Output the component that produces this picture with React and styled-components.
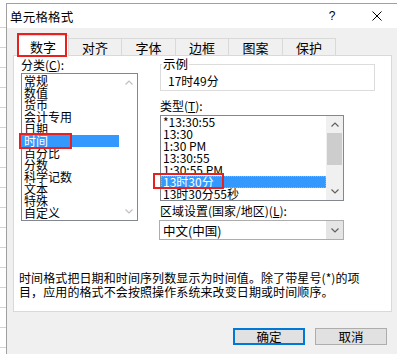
import React from "react";
import styled, { createGlobalStyle } from "styled-components";

const GlobalStyle = createGlobalStyle`
  html, body {
    margin: 0;
    padding: 0;
    background: #fff;
  }
  body {
    font-family: "Noto Sans CJK SC", "Liberation Sans", sans-serif;
    color: #000;
  }
  * {
    box-sizing: border-box;
  }
`;

// spreadsheet behind the dialog
const Sheet = styled.div`
  width: 397px;
  height: 354px;
  overflow: hidden;
  padding: 3px 0 0 6px;
  background-color: #fff;
  background-image: repeating-linear-gradient(
    to bottom,
    transparent 0 19px,
    #d4d4d4 19px 20px
  );
  background-size: 6px 100%;
  background-repeat: no-repeat;
  background-position: 0 8px;
`;

const Dialog = styled.div`
  width: 391px;
  height: 351px;
  background: #f0f0f0;
  border-left: 1px solid #a0a0a0;
  border-top: 1px solid #a0a0a0;
  display: flex;
  flex-direction: column;
`;

const TitleBar = styled.div`
  height: 24px;
  background: #fff;
  display: flex;
  align-items: center;
  padding-left: 3px;
  font-size: 12.5px;
`;

const TitleText = styled.div`
  flex: 1;
  letter-spacing: 0.2px;
`;

const TitleButton = styled.div`
  width: ${({ $w }) => $w}px;
  margin-left: ${({ $gap }) => $gap || 0}px;
  display: flex;
  align-items: center;
  justify-content: center;
  font-family: "Liberation Sans", sans-serif;
  font-size: 12px;
`;

const Body = styled.div`
  flex: 1;
  padding: 7px 5px 0 6px;
  display: flex;
  flex-direction: column;
`;

const Tabs = styled.div`
  display: flex;
  align-items: flex-end;
  height: 21px;
  padding-left: 4px;
  margin-bottom: -1px;
  position: relative;
  z-index: 1;
`;

const Tab = styled.div`
  position: relative;
  width: ${({ $w }) => $w}px;
  height: ${({ $active }) => ($active ? 21 : 18)}px;
  margin-left: ${({ $first }) => ($first ? 0 : -1)}px;
  border: 1px solid #d9d9d9;
  border-bottom: ${({ $active }) => ($active ? "none" : "1px solid #d9d9d9")};
  background: ${({ $active }) => ($active ? "#fff" : "#f0f0f0")};
  z-index: ${({ $active }) => ($active ? 2 : 0)};
  display: flex;
  align-items: center;
  justify-content: center;
  font-size: 13px;
  padding-top: ${({ $active }) => ($active ? 1 : 0)}px;
`;

// red annotation rectangles drawn over the dialog
const RedMark = styled.div`
  position: absolute;
  left: ${({ $l }) => $l}px;
  top: ${({ $t }) => $t}px;
  width: ${({ $w }) => $w}px;
  height: ${({ $h }) => $h}px;
  border: 2px solid #e8201e;
  pointer-events: none;
  z-index: 5;
`;

const Panel = styled.div`
  width: 379px;
  height: 257px;
  border: 1px solid #d9d9d9;
  background: #fff;
  padding: 2px 0 0 7px;
  display: flex;
  flex-direction: column;
  font-size: 12px;
`;

const TopRow = styled.div`
  display: flex;
  height: 182px;
`;

const LeftCol = styled.div`
  width: 117px;
  display: flex;
  flex-direction: column;
`;

const RightCol = styled.div`
  margin-left: 22px;
  width: 216px;
  display: flex;
  flex-direction: column;
`;

const Label = styled.div`
  line-height: 14px;
  height: 14px;
  margin-top: ${({ $mt }) => $mt || 0}px;
  white-space: nowrap;
  u {
    text-decoration: underline;
    text-underline-offset: 1px;
  }
`;

const GroupBox = styled.div`
  position: relative;
  margin-top: 6px;
  width: 215px;
  height: 27px;
  border: 1px solid #dcdcdc;
  padding: 9px 0 0 7px;
  line-height: 14px;
`;

const Legend = styled.span`
  position: absolute;
  left: 1px;
  top: -8px;
  padding: 0 1px;
  background: #fff;
  line-height: 14px;
  font-size: 12.5px;
`;

const ListBox = styled.div`
  position: relative;
  width: ${({ $w }) => $w}px;
  height: ${({ $h }) => $h}px;
  margin-top: ${({ $mt }) => $mt || 0}px;
  border: 1px solid #828790;
  background: #fff;
  display: flex;
`;

const Items = styled.div`
  flex: 1;
  padding-top: ${({ $pt }) => $pt || 0}px;
`;

const Item = styled.div`
  height: 12px;
  line-height: 12px;
  padding-left: 2px;
  white-space: nowrap;
  background: ${({ $selected }) => ($selected ? "#3399ff" : "transparent")};
  color: ${({ $selected }) => ($selected ? "#fff" : "#000")};
  margin-right: ${({ $trim }) => $trim || 0}px;
  outline: ${({ $focus }) => ($focus ? "1px dotted #f0a030" : "none")};
  outline-offset: -1px;
`;

const ScrollBar = styled.div`
  width: 17px;
  background: ${({ $bg }) => $bg};
  display: flex;
  flex-direction: column;
`;

const ScrollArrow = styled.div`
  height: 17px;
  display: flex;
  align-items: center;
  justify-content: center;
`;

const ScrollTrack = styled.div`
  flex: 1;
  display: flex;
  flex-direction: column;
`;

const Thumb = styled.div`
  height: ${({ $h }) => $h}px;
  margin: 0 1px;
  background: #cdcdcd;
`;

const Select = styled.div`
  margin-top: 2px;
  margin-left: -1px;
  width: 185px;
  height: 20px;
  border: 1px solid #adadad;
  background: #fff;
  display: flex;
  align-items: stretch;
`;

const SelectValue = styled.div`
  flex: 1;
  padding-left: 3px;
  display: flex;
  align-items: center;
  font-size: 12.5px;
`;

const SelectButton = styled.div`
  width: 17px;
  background: #e5e5e5;
  display: flex;
  align-items: center;
  justify-content: center;
`;

const Description = styled.div`
  margin-top: 31px;
  margin-left: -2px;
  line-height: 14px;
  font-size: 12px;
  letter-spacing: 0.1px;
  white-space: nowrap;
`;

const ButtonRow = styled.div`
  display: flex;
  justify-content: flex-end;
  gap: 10px;
  margin-top: 16px;
  padding-right: 5px;
`;

const Button = styled.div`
  width: 72px;
  height: 17px;
  background: #e1e1e1;
  border: ${({ $primary }) =>
    $primary ? "2px solid #0078d7" : "1px solid #adadad"};
  display: flex;
  align-items: center;
  justify-content: center;
  font-size: 12.5px;
`;

const Chevron = ({ up, color }) => (
  <svg width="8" height="5" viewBox="0 0 8 5">
    <polyline
      points={up ? "0.5,4.5 4,1 7.5,4.5" : "0.5,0.5 4,4 7.5,0.5"}
      fill="none"
      stroke={color}
      strokeWidth="1.2"
    />
  </svg>
);

const CloseIcon = () => (
  <svg width="10" height="10" viewBox="0 0 10 10">
    <path d="M0.5 0.5 L9.5 9.5 M9.5 0.5 L0.5 9.5" stroke="#000" strokeWidth="1" />
  </svg>
);

const tabs = [
  { label: "数字", w: 52 },
  { label: "对齐", w: 54 },
  { label: "字体", w: 55 },
  { label: "边框", w: 54 },
  { label: "图案", w: 55 },
  { label: "保护", w: 54 },
];

const categories = [
  "常规",
  "数值",
  "货币",
  "会计专用",
  "日期",
  "时间",
  "百分比",
  "分数",
  "科学记数",
  "文本",
  "特殊",
  "自定义",
];

const types = [
  "*13:30:55",
  "13:30",
  "1:30 PM",
  "13:30:55",
  "1:30:55 PM",
  "13时30分",
  "13时30分55秒",
];

const App = () => {
  return (
    <Sheet>
      <GlobalStyle />
      <Dialog>
        <TitleBar>
          <TitleText>单元格格式</TitleText>
          <TitleButton $w={30}>?</TitleButton>
          <TitleButton $w={40} $gap={10}>
            <CloseIcon />
          </TitleButton>
        </TitleBar>
        <Body>
          <Tabs>
            {tabs.map((tab, index) => (
              <Tab key={index} $w={tab.w} $active={index === 0} $first={index === 0}>
                {tab.label}
                {index === 0 && <RedMark $l={-1} $t={-3} $w={50} $h={24} />}
              </Tab>
            ))}
          </Tabs>
          <Panel>
            <TopRow>
              <LeftCol>
                <Label>
                  分类(<u>C</u>):
                </Label>
                <ListBox $w={117} $h={148} $mt={1}>
                  <Items $pt={1}>
                    {categories.map((item, index) => (
                      <Item key={index} $selected={item === "时间"} $trim={1}>
                        {item}
                      </Item>
                    ))}
                  </Items>
                  <ScrollBar $bg="#fff">
                    <ScrollArrow>
                      <Chevron up color="#c0c0c0" />
                    </ScrollArrow>
                    <ScrollTrack />
                    <ScrollArrow>
                      <Chevron color="#c0c0c0" />
                    </ScrollArrow>
                  </ScrollBar>
                  <RedMark $l={-3} $t={59} $w={53} $h={16} />
                </ListBox>
              </LeftCol>
              <RightCol>
                <GroupBox>
                  <Legend>示例</Legend>
                  17时49分
                </GroupBox>
                <Label $mt={8}>
                  类型(<u>T</u>):
                </Label>
                <ListBox $w={184} $h={86} $mt={2}>
                  <Items>
                    {types.map((item, index) => (
                      <Item key={index} $selected={index === 5} $focus={index === 5}>
                        {item}
                      </Item>
                    ))}
                  </Items>
                  <ScrollBar $bg="#f0f0f0">
                    <ScrollArrow>
                      <Chevron up color="#606060" />
                    </ScrollArrow>
                    <ScrollTrack>
                      <Thumb $h={32} />
                    </ScrollTrack>
                    <ScrollArrow>
                      <Chevron color="#606060" />
                    </ScrollArrow>
                  </ScrollBar>
                  <RedMark $l={-8} $t={57} $w={71} $h={16} />
                </ListBox>
                <Label $mt={3}>
                  区域设置(国家/地区)(<u>L</u>):
                </Label>
                <Select>
                  <SelectValue>中文(中国)</SelectValue>
                  <SelectButton>
                    <Chevron color="#606060" />
                  </SelectButton>
                </Select>
              </RightCol>
            </TopRow>
            <Description>
              时间格式把日期和时间序列数显示为时间值。除了带星号(*)的项
              <br />
              目，应用的格式不会按照操作系统来改变日期或时间顺序。
            </Description>
          </Panel>
          <ButtonRow>
            <Button $primary>确定</Button>
            <Button>取消</Button>
          </ButtonRow>
        </Body>
      </Dialog>
    </Sheet>
  );
};

export default App;
